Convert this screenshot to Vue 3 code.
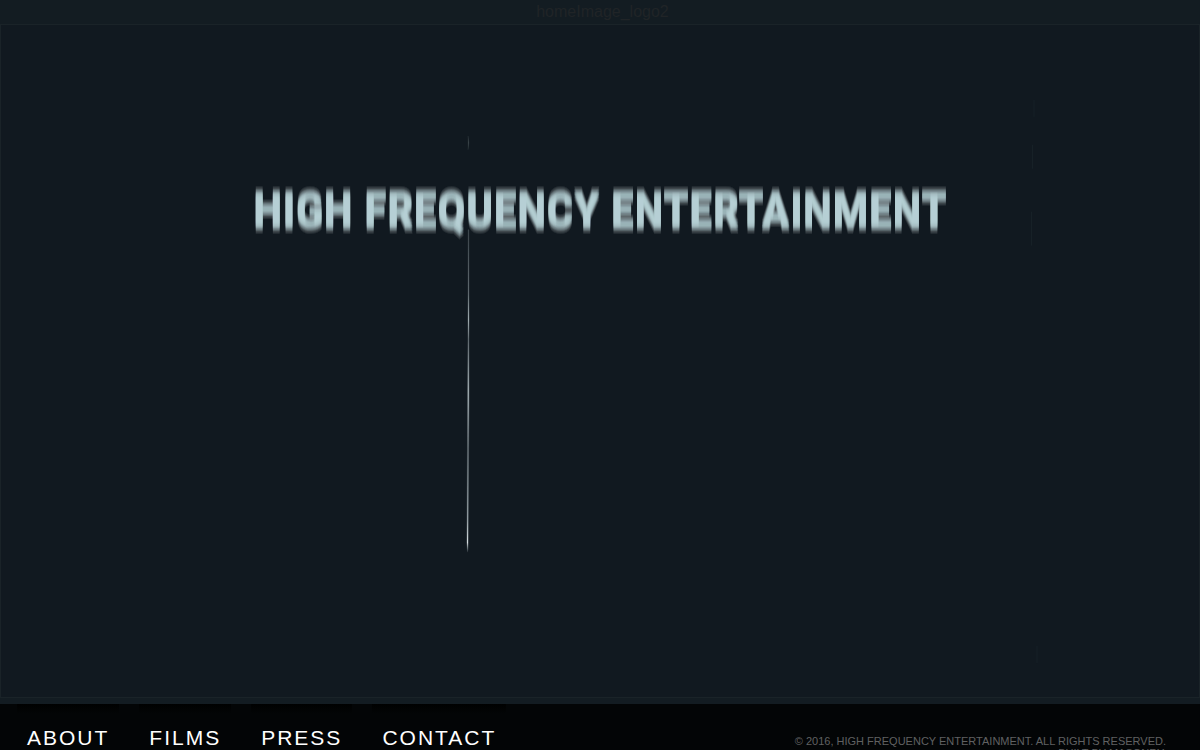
<script setup>
const links = ['About', 'Films', 'Press', 'Contact']
</script>

<template>
  <div class="page">
    <header class="top">homeImage_logo2</header>
    <main class="stage">
      <h1 class="title">High Frequency Entertainment</h1>
      <svg class="scratches" viewBox="0 0 1198 673" preserveAspectRatio="none" aria-hidden="true">
        <defs>
          <linearGradient id="thread" x1="0" y1="0" x2="0" y2="1">
            <stop offset="0" stop-color="#b8c4c8" stop-opacity="0.2" />
            <stop offset="0.2" stop-color="#b8c4c8" stop-opacity="0.4" />
            <stop offset="0.28" stop-color="#b8c4c8" stop-opacity="0.8" />
            <stop offset="0.34" stop-color="#b8c4c8" stop-opacity="0.4" />
            <stop offset="0.5" stop-color="#b8c4c8" stop-opacity="0.8" />
            <stop offset="0.68" stop-color="#b8c4c8" stop-opacity="0.5" />
            <stop offset="0.9" stop-color="#b8c4c8" stop-opacity="0.8" />
            <stop offset="0.97" stop-color="#d5dde0" stop-opacity="1" />
            <stop offset="1" stop-color="#b8c4c8" stop-opacity="0.2" />
          </linearGradient>
        </defs>
        <path d="M467 111L468 118L467 125Z" fill="#3c464b" stroke="#3c464b" stroke-width="0.2" />
        <path d="M467 205L468 205L468 270L468 380L467.500 440L467 525L466.500 528L466 518L466.500 410L467 300Z" fill="url(#thread)" stroke="url(#thread)" stroke-width="0.3" />
        <path d="M1033 75V92M1031.500 120V144M1030.500 187V221M1036 622V639" stroke="#172127" stroke-width="1" fill="none" />
      </svg>
    </main>
    <footer class="footer">
      <nav class="nav">
        <a v-for="l in links" :key="l" href="#">{{ l }}</a>
      </nav>
      <p class="legal">© 2016, High Frequency Entertainment. All rights reserved.<br />Built by Masonry.</p>
    </footer>
  </div>
</template>

<style>
body {
  overflow: hidden;
  background: #131c22;
}
</style>

<style scoped>
.page {
  display: flex;
  flex-direction: column;
  height: 100vh;
  overflow: hidden;
  background: #131c22;
  font-family: "Liberation Sans", Arial, sans-serif;
}
.top {
  height: 24px;
  line-height: 24px;
  padding-left: 5px;
  text-align: center;
  font-size: 16px;
  color: #202427;
}
.stage {
  position: relative;
  flex: 1;
  box-sizing: border-box;
  margin-bottom: 6px;
  border: 1px solid #1a2328;
  background: #111920;
}
.title {
  --core: rgba(194, 222, 225, 0.28);
  --smear: rgba(194, 222, 225, 0.18);
  --edge: rgba(180, 194, 194, 0.11);
  margin: 156px 0 0;
  text-align: center;
  text-transform: uppercase;
  white-space: nowrap;
  font-family: "Roboto Condensed", "Liberation Sans Narrow", "Liberation Sans", sans-serif;
  font-size: 48px;
  line-height: 60px;
  font-weight: 700;
  color: var(--core);
  will-change: transform;
  text-shadow:
    0 -1px var(--core), 0 1px var(--core),
    0 -2px var(--smear), 0 2px var(--smear),
    0 -3px var(--smear), 0 3px var(--smear),
    0 -4px var(--smear), 0 4px var(--smear),
    0 -5px var(--edge), 0 5px var(--edge),
    0 -6px var(--edge), 0 6px var(--edge),
    0 -7px var(--edge), 0 7px var(--edge);
}
.scratches {
  position: absolute;
  inset: 0;
  width: 100%;
  height: 100%;
}
.footer {
  display: flex;
  justify-content: space-between;
  height: 46px;
  padding: 0 34px 0 17px;
  background: #030506;
}
.nav {
  display: flex;
  gap: 20px;
}
.nav a {
  padding: 22px 10px 0;
  font-size: 21px;
  line-height: 24px;
  letter-spacing: 2px;
  text-transform: uppercase;
  text-decoration: none;
  color: #fff;
  background: linear-gradient(#000, #030506 10px);
}
.legal {
  margin: 31px 0 0;
  font-size: 11px;
  line-height: 12px;
  text-align: right;
  text-transform: uppercase;
  color: #606162;
}
</style>
